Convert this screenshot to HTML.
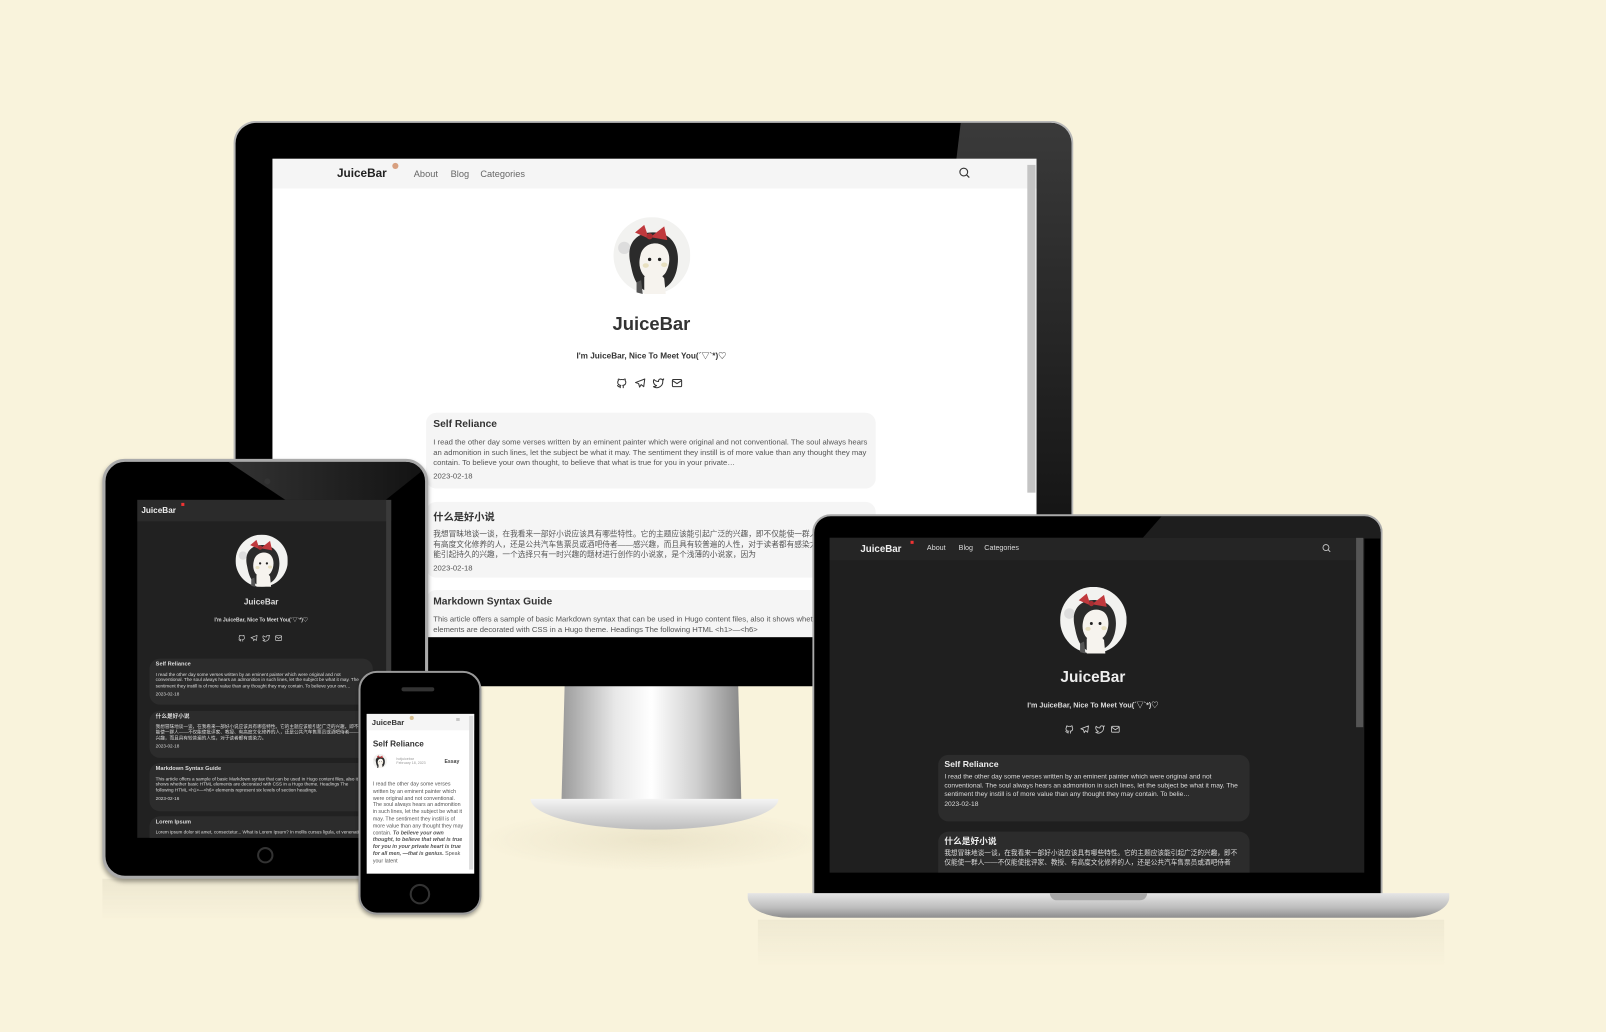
<!DOCTYPE html>
<html><head><meta charset="utf-8">
<style>
*{margin:0;padding:0;box-sizing:border-box}
html,body{width:1606px;height:1032px;overflow:hidden;background:#f9f3dc}
#w{position:absolute;left:0;top:0;width:1568px;height:1008px;transform:scale(1.02423);transform-origin:0 0;font-family:"Liberation Sans","Noto Sans CJK SC",sans-serif}
.a{position:absolute}
.t{position:absolute;white-space:nowrap}
.c{text-align:center;transform:translateX(-50%)}
.card{position:absolute;border-radius:10px;overflow:hidden}
.card .h{font-weight:bold;white-space:nowrap}
.card .p{white-space:nowrap;overflow:hidden}
svg{display:block}
</style></head><body><div id="w">

<svg width="0" height="0" style="position:absolute">
<defs>
<symbol id="av" viewBox="0 0 100 100">
<circle cx="50" cy="50" r="50" fill="#f2f2f0"/>
<circle cx="14" cy="40" r="8" fill="#ddd"/>
<path d="M22 60 C15 30 35 18 55 20 C80 22 88 45 82 70 C78 85 70 92 60 95 L40 95 C28 88 25 75 22 60Z" fill="#2b2b2b"/>
<path d="M35 50 C38 35 55 30 66 38 C75 46 74 62 68 72 C62 82 45 84 38 74 C33 66 33 58 35 50Z" fill="#f6f3ee"/>
<path d="M40 78 C45 70 60 70 66 80 L68 100 L40 100Z" fill="#f6f3ee"/>
<path d="M30 85 L36 82 L38 100 L30 98Z" fill="#555"/>
<circle cx="47" cy="55" r="2.2" fill="#222"/><circle cx="60" cy="55" r="2.2" fill="#222"/>
<ellipse cx="42" cy="63" rx="4" ry="3" fill="#e8e0c0"/><ellipse cx="66" cy="62" rx="4" ry="3" fill="#e8e0c0"/>
<path d="M28 20 L46 28 L40 10 Z M48 26 L66 12 L70 30 Z" fill="#c0393d"/>
<circle cx="47" cy="25" r="4" fill="#a82e32"/>
</symbol>
<symbol id="gh" viewBox="0 0 24 24"><path d="M9 19c-4 1.5-4-2-6-2.5M15 22v-3.5c0-1 .1-1.4-.5-2 2.8-.3 5.5-1.4 5.5-6a4.6 4.6 0 0 0-1.300-3.200 4.2 4.2 0 0 0-.1-3.2s-1-.3-3.4 1.3a11.6 11.6 0 0 0-6.2 0C6.6 3.8 5.6 4.1 5.6 4.1a4.2 4.2 0 0 0-.1 3.2A4.6 4.6 0 0 0 4.2 10.5c0 4.6 2.7 5.7 5.5 6-.6.6-.6 1.2-.5 2V22" fill="none" stroke="currentColor" stroke-width="2"/></symbol>
<symbol id="tg" viewBox="0 0 24 24"><path d="M21 4L3 11l6 2 2 7 3-5 5 4z" fill="none" stroke="currentColor" stroke-width="2" stroke-linejoin="round"/></symbol>
<symbol id="tw" viewBox="0 0 24 24"><path d="M22 4s-.7 2.1-2 3.4c1.6 10-9.4 17.3-18 11.6 2.2.1 4.4-.6 6-2C3 15.5.5 9.6 3 5c2.2 2.6 5.6 4.1 9 4-.9-4.2 4-6.600 7-3.800 1.1 0 3-1.2 3-1.2z" fill="none" stroke="currentColor" stroke-width="2" stroke-linejoin="round"/></symbol>
<symbol id="ml" viewBox="0 0 24 24"><rect x="3" y="5" width="18" height="14" rx="2" fill="none" stroke="currentColor" stroke-width="2"/><path d="M3 7l9 6 9-6" fill="none" stroke="currentColor" stroke-width="2"/></symbol>
<symbol id="sr" viewBox="0 0 24 24"><circle cx="11" cy="11" r="7" fill="none" stroke="currentColor" stroke-width="2"/><path d="M16 16l5 5" stroke="currentColor" stroke-width="2"/></symbol>
</defs></svg>

<!-- reflections / shadows -->
<div class="a" style="left:100px;top:858px;width:330px;height:40px;background:linear-gradient(#ede7d0,rgba(249,243,220,0))"></div>
<div class="a" style="left:740px;top:898px;width:670px;height:45px;background:linear-gradient(#efe9d2,rgba(249,243,220,0))"></div>
<div class="a" style="left:470px;top:790px;width:340px;height:60px;border-radius:50%;background:radial-gradient(#ebe4ca,rgba(249,243,220,0) 70%)"></div>

<!-- MONITOR -->
<div class="a" style="left:548px;top:660px;width:176px;height:130px;background:linear-gradient(90deg,#9a9a9a,#e8e8e8 30%,#fff 50%,#d0d0d0 75%,#888);clip-path:polygon(2% 0,98% 0,100% 100%,0 100%)"></div>
<div class="a" style="left:518px;top:780px;width:242px;height:30px;border-radius:0 0 50% 50%/0 0 100% 100%;background:linear-gradient(#f4f4f4,#bdbdbd)"></div>
<div class="a" style="left:228px;top:118px;width:820px;height:552px;border-radius:22px 22px 0 0;background:#000;border:2px solid #b8b8b8;border-bottom:none;overflow:hidden">
 <div class="a" style="left:660px;top:0;width:160px;height:400px;background:linear-gradient(180deg,#3a3a3a,#141414);clip-path:polygon(30% 0,100% 0,100% 100%,0 100%)"></div>
</div>
<div class="a" style="left:266px;top:155px;width:746px;height:467px;background:#fff;overflow:hidden">
 <div class="a" style="left:0;top:0;width:746px;height:29px;background:#f5f5f5"></div>
 <div class="t" style="left:63px;top:9px;font-size:11.5px;font-weight:bold;color:#222">JuiceBar</div>
 <div class="a" style="left:117px;top:4px;width:6px;height:6px;border-radius:50%;background:#d8a080"></div>
 <div class="t" style="left:138px;top:10px;font-size:9px;color:#666">About</div>
 <div class="t" style="left:174px;top:10px;font-size:9px;color:#666">Blog</div>
 <div class="t" style="left:203px;top:10px;font-size:9px;color:#666">Categories</div>
 <svg class="a" style="left:669px;top:7px;color:#333" width="13" height="13"><use href="#sr"/></svg>
 <div class="a" style="left:737px;top:6px;width:8px;height:320px;background:#c4c4c4"></div>
 <svg class="a" style="left:333px;top:57px" width="75" height="75"><use href="#av"/></svg>
 <div class="t c" style="left:370px;top:151px;font-size:18px;font-weight:bold;color:#333">JuiceBar</div>
 <div class="t c" style="left:370px;top:187px;font-size:8px;font-weight:bold;color:#333">I'm JuiceBar, Nice To Meet You(´▽`*)♡</div>
 <div class="a" style="left:335px;top:213px;color:#333;display:flex;gap:6px"><svg width="12" height="12"><use href="#gh"/></svg><svg width="12" height="12"><use href="#tg"/></svg><svg width="12" height="12"><use href="#tw"/></svg><svg width="12" height="12"><use href="#ml"/></svg></div>
 <div class="card" style="left:150px;top:248px;width:439px;height:74px;background:#f5f5f5;padding:6px 7px;color:#555">
  <div class="h" style="font-size:10px;color:#333">Self Reliance</div>
  <div class="p" style="font-size:7.5px;line-height:9.8px;margin-top:7px;white-space:normal;height:30px">I read the other day some verses written by an eminent painter which were original and not conventional. The soul always hears an admonition in such lines, let the subject be what it may. The sentiment they instill is of more value than any thought they may contain. To believe your own thought, to believe that what is true for you in your private…</div>
  <div style="font-size:7.5px;margin-top:3px">2023-02-18</div>
 </div>
 <div class="card" style="left:150px;top:335px;width:439px;height:74px;background:#f5f5f5;padding:6px 7px;color:#555">
  <div class="h" style="font-size:10px;color:#333">什么是好小说</div>
  <div class="p" style="font-size:7.5px;line-height:10px;margin-top:6px;white-space:normal;height:30px">我想冒昧地谈一谈，在我看来一部好小说应该具有哪些特性。它的主题应该能引起广泛的兴趣，即不仅能使一群人评家、教授、有高度文化修养的人，还是公共汽车售票员或酒吧侍者——感兴趣，而且具有较普遍的人性，对于读者都有感染力。主题还应该能引起持久的兴趣，一个选择只有一时兴趣的题材进行创作的小说家，是个浅薄的小说家，因为</div>
  <div style="font-size:7.5px;margin-top:3px">2023-02-18</div>
 </div>
 <div class="card" style="left:150px;top:421px;width:439px;height:60px;background:#f5f5f5;padding:6px 7px;color:#555">
  <div class="h" style="font-size:10px;color:#333">Markdown Syntax Guide</div>
  <div class="p" style="font-size:7.5px;line-height:10px;margin-top:7px;white-space:normal">This article offers a sample of basic Markdown syntax that can be used in Hugo content files, also it shows whether basic HTML elements are decorated with CSS in a Hugo theme. Headings The following HTML &lt;h1&gt;—&lt;h6&gt;</div>
 </div>
</div>

<!-- TABLET -->
<div class="a" style="left:100px;top:448px;width:318px;height:410px;border-radius:22px;background:#000;border:3px solid #aaa;box-shadow:0 3px 4px rgba(0,0,0,.35);overflow:hidden">
 <div class="a" style="left:120px;top:0;width:200px;height:40px;background:linear-gradient(90deg,#333,#111);clip-path:polygon(0 0,100% 0,75% 100%,30% 100%)"></div>
 <div class="a" style="left:155px;top:16px;width:6px;height:6px;border-radius:50%;background:#333"></div>
 <div class="a" style="left:148px;top:376px;width:16px;height:16px;border-radius:50%;border:2px solid #333"></div>
</div>
<div class="a" style="left:134px;top:488px;width:248px;height:330px;background:#212121;overflow:hidden;color:#ddd">
 <div class="a" style="left:0;top:0;width:248px;height:21px;background:#2b2b2b"></div>
 <div class="t" style="left:4px;top:6px;font-size:8px;font-weight:bold;color:#eee">JuiceBar</div>
 <div class="a" style="left:43px;top:3px;width:3px;height:3px;background:#e33"></div>
 <div class="a" style="left:243px;top:0;width:5px;height:330px;background:#3a3a3a"></div>
 <svg class="a" style="left:96px;top:34px" width="51" height="51"><use href="#av"/></svg>
 <div class="t c" style="left:121px;top:95px;font-size:8px;font-weight:bold">JuiceBar</div>
 <div class="t c" style="left:121px;top:114px;font-size:5px;font-weight:bold">I'm JuiceBar, Nice To Meet You(´▽`*)♡</div>
 <div class="a" style="left:98px;top:131px;display:flex;gap:4px;color:#ccc"><svg width="8" height="8"><use href="#gh"/></svg><svg width="8" height="8"><use href="#tg"/></svg><svg width="8" height="8"><use href="#tw"/></svg><svg width="8" height="8"><use href="#ml"/></svg></div>
 <div class="card" style="left:12px;top:155px;width:218px;height:45px;background:#2c2c2c;padding:4px 6px;font-size:4.5px;line-height:5.5px"><div class="h" style="font-size:5.5px">Self Reliance</div><div style="margin-top:3px">I read the other day some verses written by an eminent painter which were original and not conventional. The soul always hears an admonition in such lines, let the subject be what it may. The sentiment they instill is of more value than any thought they may contain. To believe your own…</div><div style="margin-top:3px">2023-02-18</div></div>
 <div class="card" style="left:12px;top:206px;width:218px;height:46px;background:#2c2c2c;padding:4px 6px;font-size:4.5px;line-height:5.5px"><div class="h" style="font-size:5.5px">什么是好小说</div><div style="margin-top:3px">我想冒昧地谈一谈，在我看来一部好小说应该具有哪些特性。它的主题应该能引起广泛的兴趣，即不仅能使一群人——不仅能使批评家、教授、有高度文化修养的人，还是公共汽车售票员或酒吧侍者——感兴趣，而且具有较普遍的人性，对于读者都有感染力。</div><div style="margin-top:3px">2023-02-18</div></div>
 <div class="card" style="left:12px;top:257px;width:218px;height:47px;background:#2c2c2c;padding:4px 6px;font-size:4.5px;line-height:5.5px"><div class="h" style="font-size:5.5px">Markdown Syntax Guide</div><div style="margin-top:3px">This article offers a sample of basic Markdown syntax that can be used in Hugo content files, also it shows whether basic HTML elements are decorated with CSS in a Hugo theme. Headings The following HTML &lt;h1&gt;—&lt;h6&gt; elements represent six levels of section headings.</div><div style="margin-top:3px">2023-02-16</div></div>
 <div class="card" style="left:12px;top:309px;width:218px;height:40px;background:#2c2c2c;padding:4px 6px;font-size:4.5px;line-height:5.5px"><div class="h" style="font-size:5.5px">Lorem Ipsum</div><div style="margin-top:3px">Lorem ipsum dolor sit amet, consectetur... What is Lorem Ipsum? In mollis cursus ligula, et venenatis</div></div>
</div>

<!-- PHONE -->
<div class="a" style="left:350px;top:655px;width:120px;height:238px;border-radius:18px;background:#000;border:2px solid #999;box-shadow:0 2px 3px rgba(0,0,0,.3)">
 <div class="a" style="left:40px;top:14px;width:32px;height:4px;border-radius:2px;background:#333"></div>
 <div class="a" style="left:48px;top:206px;width:20px;height:20px;border-radius:50%;border:2px solid #333"></div>
</div>
<div class="a" style="left:358px;top:697px;width:105px;height:156px;background:#fff;overflow:hidden;color:#555">
 <div class="a" style="left:0;top:0;width:105px;height:16px;background:#f5f5f5"></div>
 <div class="t" style="left:5px;top:4px;font-size:7.5px;font-weight:bold;color:#333">JuiceBar</div>
 <div class="a" style="left:42px;top:2px;width:4px;height:4px;border-radius:50%;background:#d8c090"></div>
 <div class="t" style="left:87px;top:3px;font-size:7px;color:#999">≡</div>
 <div class="a" style="left:100px;top:2px;width:4px;height:150px;background:#ddd"></div>
 <div class="t" style="left:6px;top:25px;font-size:8px;font-weight:bold;color:#333">Self Reliance</div>
 <svg class="a" style="left:6px;top:39px" width="14" height="14"><use href="#av"/></svg>
 <div class="t" style="left:29px;top:42px;font-size:3.5px;color:#999">hotjuicebar<br>February 18, 2023</div>
 <div class="t" style="left:76px;top:44px;font-size:5px;font-weight:bold;color:#444">Essay</div>
 <div class="a" style="left:6px;top:66px;width:90px;font-size:5.2px;line-height:6.8px">I read the other day some verses written by an eminent painter which were original and not conventional. The soul always hears an admonition in such lines, let the subject be what it may. The sentiment they instill is of more value than any thought they may contain. <b><i>To believe your own thought, to believe that what is true for you in your private heart is true for all men, —that is genius.</i></b> Speak your latent</div>
</div>

<!-- LAPTOP -->
<div class="a" style="left:793px;top:502px;width:557px;height:372px;border-radius:18px 18px 0 0;background:#000;border:2px solid #aaa;border-bottom:none;overflow:hidden">
 <div class="a" style="left:320px;top:0;width:240px;height:22px;background:#1e1e1e;clip-path:polygon(8% 0,100% 0,100% 100%,0 100%)"></div>
</div>
<div class="a" style="left:730px;top:872px;width:685px;height:24px;border-radius:0 0 40px 40px/0 0 20px 20px;background:linear-gradient(#e6e6e6,#bcbcbc 60%,#8d8d8d)"></div>
<div class="a" style="left:1025px;top:872px;width:95px;height:7px;border-radius:0 0 8px 8px;background:#a8a8a8"></div>
<div class="a" style="left:810px;top:525px;width:522px;height:327px;background:#1f1f1f;overflow:hidden;color:#ddd">
 <div class="a" style="left:0;top:0;width:522px;height:22px;background:#252525"></div>
 <div class="t" style="left:30px;top:6px;font-size:9.5px;font-weight:bold;color:#eee">JuiceBar</div>
 <div class="a" style="left:79px;top:3px;width:3px;height:3px;background:#e33"></div>
 <div class="t" style="left:95px;top:7px;font-size:7px;color:#ddd">About</div>
 <div class="t" style="left:126px;top:7px;font-size:7px;color:#ddd">Blog</div>
 <div class="t" style="left:151px;top:7px;font-size:7px;color:#ddd">Categories</div>
 <svg class="a" style="left:480px;top:5px;color:#ccc" width="10" height="10"><use href="#sr"/></svg>
 <div class="a" style="left:514px;top:0;width:7px;height:185px;background:#555"></div>
 <svg class="a" style="left:225px;top:48px" width="65" height="65"><use href="#av"/></svg>
 <div class="t c" style="left:257px;top:128px;font-size:15px;font-weight:bold;color:#eee">JuiceBar</div>
 <div class="t c" style="left:257px;top:159px;font-size:7px;font-weight:bold">I'm JuiceBar, Nice To Meet You(´▽`*)♡</div>
 <div class="a" style="left:229px;top:182px;display:flex;gap:5px;color:#ccc"><svg width="10" height="10"><use href="#gh"/></svg><svg width="10" height="10"><use href="#tg"/></svg><svg width="10" height="10"><use href="#tw"/></svg><svg width="10" height="10"><use href="#ml"/></svg></div>
 <div class="card" style="left:106px;top:212px;width:304px;height:65px;background:#2c2c2c;padding:5px 6px;font-size:6.5px;line-height:8.3px"><div class="h" style="font-size:8.5px;color:#eee">Self Reliance</div><div style="margin-top:5px;height:25px;overflow:hidden">I read the other day some verses written by an eminent painter which were original and not conventional. The soul always hears an admonition in such lines, let the subject be what it may. The sentiment they instill is of more value than any thought they may contain. To belie…</div><div style="margin-top:2px">2023-02-18</div></div>
 <div class="card" style="left:106px;top:287px;width:304px;height:60px;background:#2c2c2c;padding:5px 6px;font-size:6.5px;line-height:8.3px"><div class="h" style="font-size:8.5px;color:#eee">什么是好小说</div><div style="margin-top:5px">我想冒昧地谈一谈，在我看来一部好小说应该具有哪些特性。它的主题应该能引起广泛的兴趣，即不仅能使一群人——不仅能使批评家、教授、有高度文化修养的人，还是公共汽车售票员或酒吧侍者</div></div>
</div>

</div></body></html>
